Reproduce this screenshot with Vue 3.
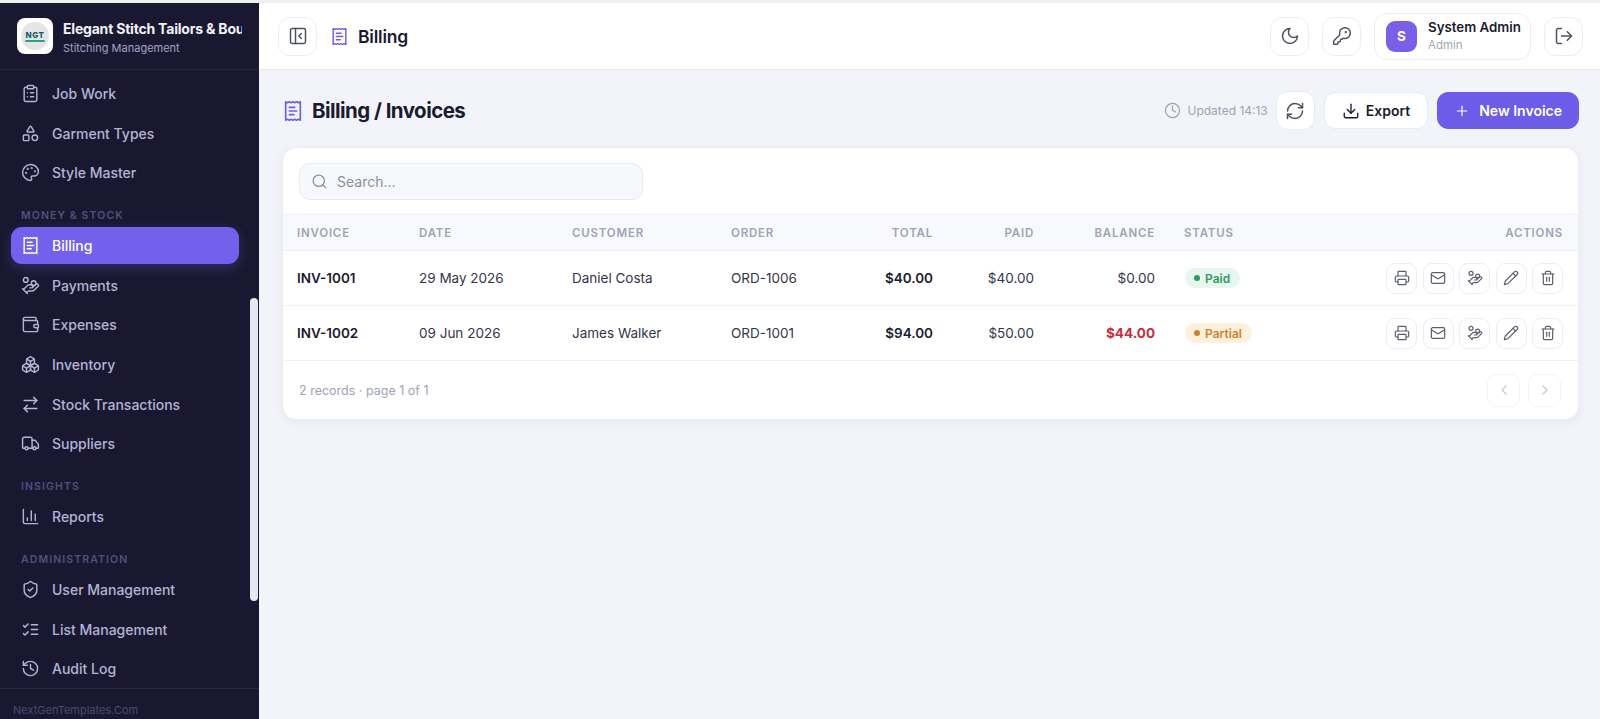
<template>
  <div class="app">
    <aside class="sidebar">
      <div class="brand">
        <div class="logo">
          <div class="logo-mark">
            <span>NGT</span>
            <i></i>
          </div>
        </div>
        <div class="brand-text">
          <div class="brand-name">Elegant Stitch Tailors &amp; Boutique</div>
          <div class="brand-sub">Stitching Management</div>
        </div>
      </div>

      <nav class="nav">
        <template v-for="group in navGroups" :key="group.title">
          <div v-if="group.title" class="nav-title">{{ group.title }}</div>
          <a v-for="item in group.items" :key="item.label" class="nav-item" :class="{ active: item.active }">
            <Icon :name="item.icon" :size="19" />
            <span>{{ item.label }}</span>
          </a>
        </template>
        <div class="scroll-thumb"></div>
      </nav>

      <div class="side-foot">NextGenTemplates.Com</div>
    </aside>

    <div class="main">
      <header class="topbar">
        <button class="icon-btn"><Icon name="panel" :size="20" /></button>
        <Icon class="accent" name="receipt" :size="19" />
        <div class="top-title">Billing</div>
        <div class="spacer"></div>
        <button class="icon-btn"><Icon name="moon" :size="20" /></button>
        <button class="icon-btn"><Icon name="key" :size="20" /></button>
        <div class="user">
          <div class="avatar">S</div>
          <div>
            <div class="user-name">System Admin</div>
            <div class="user-role">Admin</div>
          </div>
        </div>
        <button class="icon-btn"><Icon name="logout" :size="20" /></button>
      </header>

      <main class="content">
        <div class="page-head">
          <Icon class="accent" name="receipt" :size="22" />
          <h1>Billing / Invoices</h1>
          <div class="spacer"></div>
          <div class="updated">
            <Icon name="clock" :size="17" />
            <span>Updated 14:13</span>
          </div>
          <button class="icon-btn soft"><Icon name="refresh" :size="20" /></button>
          <button class="btn"><Icon name="download" :size="18" />Export</button>
          <button class="btn primary"><Icon name="plus" :size="16" />New Invoice</button>
        </div>

        <section class="card">
          <div class="card-top">
            <div class="search">
              <Icon name="search" :size="17" />
              <span>Search...</span>
            </div>
          </div>

          <table>
            <colgroup>
              <col style="width: 122px" />
              <col style="width: 153px" />
              <col style="width: 159px" />
              <col style="width: 115px" />
              <col style="width: 115px" />
              <col style="width: 101px" />
              <col style="width: 121px" />
              <col style="width: 120px" />
              <col />
            </colgroup>
            <thead>
              <tr>
                <th>Invoice</th>
                <th>Date</th>
                <th>Customer</th>
                <th>Order</th>
                <th class="num">Total</th>
                <th class="num">Paid</th>
                <th class="num">Balance</th>
                <th>Status</th>
                <th class="num">Actions</th>
              </tr>
            </thead>
            <tbody>
              <tr v-for="row in invoices" :key="row.id">
                <td class="strong">{{ row.id }}</td>
                <td>{{ row.date }}</td>
                <td>{{ row.customer }}</td>
                <td>{{ row.order }}</td>
                <td class="num strong">{{ row.total }}</td>
                <td class="num">{{ row.paid }}</td>
                <td class="num" :class="{ due: row.due }">{{ row.balance }}</td>
                <td>
                  <span class="pill" :class="row.status.toLowerCase()"><i></i>{{ row.status }}</span>
                </td>
                <td>
                  <div class="actions">
                    <button v-for="a in rowActions" :key="a" class="act"><Icon :name="a" :size="16" /></button>
                  </div>
                </td>
              </tr>
            </tbody>
          </table>

          <div class="card-foot">
            <span>2 records · page 1 of 1</span>
            <div class="pager">
              <button class="page-btn"><Icon name="left" :size="16" /></button>
              <button class="page-btn"><Icon name="right" :size="16" /></button>
            </div>
          </div>
        </section>
      </main>
    </div>
  </div>
</template>

<script setup>
import { h } from 'vue'

// lucide-style icons, kept as raw svg markup
const icons = {
  clipboard: '<rect x="8" y="2" width="8" height="4" rx="1"/><path d="M16 4h2a2 2 0 0 1 2 2v14a2 2 0 0 1-2 2H6a2 2 0 0 1-2-2V6a2 2 0 0 1 2-2h2"/><path d="M12 11h4"/><path d="M12 16h4"/><path d="M8 11h.01"/><path d="M8 16h.01"/>',
  shapes: '<path d="M8.3 10a.7.7 0 0 1-.626-1.079L11.4 3a.7.7 0 0 1 1.198-.043L16.3 8.9a.7.7 0 0 1-.572 1.1Z"/><rect x="3" y="14" width="7" height="7" rx="1"/><circle cx="17.5" cy="17.5" r="3.5"/>',
  palette: '<circle cx="13.5" cy="6.5" r=".5" fill="currentColor"/><circle cx="17.5" cy="10.5" r=".5" fill="currentColor"/><circle cx="8.5" cy="7.5" r=".5" fill="currentColor"/><circle cx="6.5" cy="12.5" r=".5" fill="currentColor"/><path d="M12 2C6.5 2 2 6.5 2 12s4.5 10 10 10c.926 0 1.648-.746 1.648-1.688 0-.437-.18-.835-.437-1.125-.29-.289-.438-.652-.438-1.125a1.64 1.64 0 0 1 1.668-1.668h1.996c3.051 0 5.555-2.503 5.555-5.554C21.965 6.012 17.461 2 12 2z"/>',
  receipt: '<path d="M4 2v20l2-1 2 1 2-1 2 1 2-1 2 1 2-1 2 1V2l-2 1-2-1-2 1-2-1-2 1-2-1-2 1Z"/><path d="M14 8H8"/><path d="M16 12H8"/><path d="M13 16H8"/>',
  coins: '<path d="M11 15h2a2 2 0 1 0 0-4h-3c-.6 0-1.1.2-1.4.6L3 17"/><path d="m7 21 1.6-1.4c.3-.4.8-.6 1.4-.6h4c1.1 0 2.1-.4 2.8-1.2l4.6-4.4a2 2 0 0 0-2.75-2.91l-4.2 3.9"/><path d="m2 16 6 6"/><circle cx="16" cy="9" r="2.9"/><circle cx="6" cy="5" r="3"/>',
  wallet: '<path d="M19 7V4a1 1 0 0 0-1-1H5a2 2 0 0 0 0 4h15a1 1 0 0 1 1 1v4h-3a2 2 0 0 0 0 4h3a1 1 0 0 0 1-1v-2a1 1 0 0 0-1-1"/><path d="M3 5v14a2 2 0 0 0 2 2h15a1 1 0 0 0 1-1v-4"/>',
  boxes: '<path d="M2.97 12.92A2 2 0 0 0 2 14.63v3.24a2 2 0 0 0 .97 1.71l3 1.8a2 2 0 0 0 2.06 0L12 19v-5.5l-5-3-4.03 2.42Z"/><path d="m7 16.5-4.74-2.85"/><path d="m7 16.5 5-3"/><path d="M7 16.5v5.17"/><path d="M12 13.5V19l3.97 2.38a2 2 0 0 0 2.06 0l3-1.8a2 2 0 0 0 .97-1.71v-3.24a2 2 0 0 0-.97-1.71L17 10.5l-5 3Z"/><path d="m17 16.5-5-3"/><path d="m17 16.5 4.74-2.85"/><path d="M17 16.5v5.17"/><path d="M7.97 4.42A2 2 0 0 0 7 6.13v4.37l5 3 5-3V6.13a2 2 0 0 0-.97-1.71l-3-1.8a2 2 0 0 0-2.06 0l-3 1.8Z"/><path d="M12 8 7.26 5.15"/><path d="m12 8 4.74-2.85"/><path d="M12 13.5V8"/>',
  swap: '<path d="m16 3 4 4-4 4"/><path d="M20 7H4"/><path d="m8 21-4-4 4-4"/><path d="M4 17h16"/>',
  truck: '<path d="M14 18V6a2 2 0 0 0-2-2H4a2 2 0 0 0-2 2v11a1 1 0 0 0 1 1h2"/><path d="M15 18H9"/><path d="M19 18h2a1 1 0 0 0 1-1v-3.65a1 1 0 0 0-.22-.624l-3.48-4.35A1 1 0 0 0 17.52 8H14"/><circle cx="17" cy="18" r="2"/><circle cx="7" cy="18" r="2"/>',
  chart: '<path d="M3 3v16a2 2 0 0 0 2 2h16"/><path d="M18 17V9"/><path d="M13 17V5"/><path d="M8 17v-3"/>',
  shield: '<path d="M20 13c0 5-3.5 7.5-7.66 8.95a1 1 0 0 1-.67-.01C7.5 20.5 4 18 4 13V6a1 1 0 0 1 1-1c2 0 4.5-1.2 6.24-2.72a1.17 1.17 0 0 1 1.52 0C14.51 3.81 17 5 19 5a1 1 0 0 1 1 1z"/><path d="m9 12 2 2 4-4"/>',
  checks: '<path d="m3 17 2 2 4-4"/><path d="m3 7 2 2 4-4"/><path d="M13 6h8"/><path d="M13 12h8"/><path d="M13 18h8"/>',
  history: '<path d="M3 12a9 9 0 1 0 9-9 9.75 9.75 0 0 0-6.74 2.74L3 8"/><path d="M3 3v5h5"/><path d="M12 7v5l4 2"/>',
  panel: '<rect x="3" y="3" width="18" height="18" rx="2"/><path d="M9 3v18"/><path d="m16 15-3-3 3-3"/>',
  moon: '<path d="M12 3a6 6 0 0 0 9 9 9 9 0 1 1-9-9Z"/>',
  key: '<path d="M2.586 17.414A2 2 0 0 0 2 18.828V21a1 1 0 0 0 1 1h3a1 1 0 0 0 1-1v-1a1 1 0 0 1 1-1h1a1 1 0 0 0 1-1v-1a1 1 0 0 1 1-1h.172a2 2 0 0 0 1.414-.586l.814-.814a6.5 6.5 0 1 0-4-4z"/><circle cx="16.5" cy="7.5" r=".5" fill="currentColor"/>',
  logout: '<path d="M9 21H5a2 2 0 0 1-2-2V5a2 2 0 0 1 2-2h4"/><path d="m16 17 5-5-5-5"/><path d="M21 12H9"/>',
  clock: '<circle cx="12" cy="12" r="10"/><path d="M12 6v6l4 2"/>',
  refresh: '<path d="M3 12a9 9 0 0 1 9-9 9.75 9.75 0 0 1 6.74 2.74L21 8"/><path d="M21 3v5h-5"/><path d="M21 12a9 9 0 0 1-9 9 9.75 9.75 0 0 1-6.74-2.74L3 16"/><path d="M8 16H3v5"/>',
  download: '<path d="M21 15v4a2 2 0 0 1-2 2H5a2 2 0 0 1-2-2v-4"/><path d="m7 10 5 5 5-5"/><path d="M12 15V3"/>',
  plus: '<path d="M5 12h14"/><path d="M12 5v14"/>',
  search: '<circle cx="11" cy="11" r="8"/><path d="m21 21-4.34-4.34"/>',
  printer: '<path d="M6 18H4a2 2 0 0 1-2-2v-5a2 2 0 0 1 2-2h16a2 2 0 0 1 2 2v5a2 2 0 0 1-2 2h-2"/><path d="M6 9V3a1 1 0 0 1 1-1h10a1 1 0 0 1 1 1v6"/><rect x="6" y="14" width="12" height="8" rx="1"/>',
  mail: '<rect x="2" y="4" width="20" height="16" rx="2"/><path d="m22 7-8.97 5.7a1.94 1.94 0 0 1-2.06 0L2 7"/>',
  pencil: '<path d="M21.174 6.812a1 1 0 0 0-3.986-3.987L3.842 16.174a2 2 0 0 0-.5.83l-1.321 4.352a.5.5 0 0 0 .623.622l4.353-1.32a2 2 0 0 0 .83-.497z"/><path d="m15 5 4 4"/>',
  trash: '<path d="M3 6h18"/><path d="M19 6v14c0 1-1 2-2 2H7c-1 0-2-1-2-2V6"/><path d="M8 6V4c0-1 1-2 2-2h4c1 0 2 1 2 2v2"/><line x1="10" x2="10" y1="11" y2="17"/><line x1="14" x2="14" y1="11" y2="17"/>',
  left: '<path d="m15 18-6-6 6-6"/>',
  right: '<path d="m9 18 6-6-6-6"/>',
}

const Icon = (props) =>
  h('svg', {
    width: props.size,
    height: props.size,
    viewBox: '0 0 24 24',
    fill: 'none',
    stroke: 'currentColor',
    'stroke-width': 1.8,
    'stroke-linecap': 'round',
    'stroke-linejoin': 'round',
    innerHTML: icons[props.name],
  })
Icon.props = ['name', 'size']

const navGroups = [
  {
    title: '',
    items: [
      { label: 'Job Work', icon: 'clipboard' },
      { label: 'Garment Types', icon: 'shapes' },
      { label: 'Style Master', icon: 'palette' },
    ],
  },
  {
    title: 'Money & Stock',
    items: [
      { label: 'Billing', icon: 'receipt', active: true },
      { label: 'Payments', icon: 'coins' },
      { label: 'Expenses', icon: 'wallet' },
      { label: 'Inventory', icon: 'boxes' },
      { label: 'Stock Transactions', icon: 'swap' },
      { label: 'Suppliers', icon: 'truck' },
    ],
  },
  {
    title: 'Insights',
    items: [{ label: 'Reports', icon: 'chart' }],
  },
  {
    title: 'Administration',
    items: [
      { label: 'User Management', icon: 'shield' },
      { label: 'List Management', icon: 'checks' },
      { label: 'Audit Log', icon: 'history' },
    ],
  },
]

const rowActions = ['printer', 'mail', 'coins', 'pencil', 'trash']

const invoices = [
  { id: 'INV-1001', date: '29 May 2026', customer: 'Daniel Costa', order: 'ORD-1006', total: '$40.00', paid: '$40.00', balance: '$0.00', status: 'Paid' },
  { id: 'INV-1002', date: '09 Jun 2026', customer: 'James Walker', order: 'ORD-1001', total: '$94.00', paid: '$50.00', balance: '$44.00', status: 'Partial', due: true },
]
</script>

<style scoped>
.app {
  display: flex;
  height: 719px;
  padding-top: 3px;
  box-sizing: border-box;
  overflow: hidden;
  background: #efeff1;
  font-family: Inter, "Liberation Sans", sans-serif;
  color: #1b1b30;
}
svg {
  flex: none;
  display: block;
}
button {
  font-family: inherit;
  padding: 0;
  cursor: pointer;
}

/* sidebar */
.sidebar {
  width: 259px;
  flex: none;
  display: flex;
  flex-direction: column;
  background: #1a1830;
  overflow: hidden;
}
.brand {
  height: 67px;
  flex: none;
  box-sizing: border-box;
  display: flex;
  align-items: center;
  gap: 10px;
  padding: 0 0 0 17px;
  border-bottom: 1px solid #27253f;
}
.logo {
  width: 36px;
  height: 36px;
  flex: none;
  border-radius: 8px;
  background: #fff;
  display: flex;
  align-items: center;
  justify-content: center;
}
.logo-mark {
  width: 28px;
  height: 28px;
  border-radius: 50%;
  background: #e4e6e6;
  display: flex;
  flex-direction: column;
  align-items: center;
  justify-content: center;
}
.logo-mark span {
  font-size: 8px;
  line-height: 8px;
  font-weight: 800;
  letter-spacing: 0.5px;
  color: #155a63;
}
.logo-mark i {
  width: 20px;
  height: 2px;
  margin-top: 1px;
  border-radius: 2px;
  background: #2f9d92;
}
.brand-text {
  min-width: 0;
  flex: 1;
  margin-right: 17px;
  padding-top: 2px;
  overflow: hidden;
}
.brand-name {
  font-size: 14px;
  line-height: 20px;
  font-weight: 700;
  letter-spacing: -0.2px;
  color: #f1f1f8;
  white-space: nowrap;
}
.brand-sub {
  margin-top: 2px;
  font-size: 11px;
  line-height: 15px;
  color: #a4a3c6;
  white-space: nowrap;
}
.nav {
  flex: 1;
  min-height: 0;
  overflow: hidden;
  position: relative;
  padding: 5px 20px 0 11px;
}
.nav-title {
  height: 14px;
  line-height: 14px;
  margin: 18px 0 4px 10px;
  font-size: 10.5px;
  font-weight: 600;
  letter-spacing: 1.1px;
  text-transform: uppercase;
  color: #51507c;
}
.nav-item {
  height: 37px;
  margin-bottom: 2.6px;
  display: flex;
  align-items: center;
  gap: 12px;
  padding-left: 10px;
  border-radius: 11px;
  font-size: 14px;
  font-weight: 500;
  color: #b3b4d6;
}
.nav-item.active {
  background: #7361ee;
  color: #fff;
  box-shadow: 0 4px 12px rgba(108, 92, 231, 0.3);
}
.scroll-thumb {
  position: absolute;
  top: 228px;
  right: 1px;
  width: 8px;
  height: 303px;
  border-radius: 4px;
  background: #e6e7f1;
}
.side-foot {
  height: 31px;
  flex: none;
  box-sizing: border-box;
  border-top: 1px solid #27253f;
  padding: 14px 0 0 13px;
  font-size: 11px;
  line-height: 14px;
  color: #4b4a72;
}

/* main area */
.main {
  flex: 1;
  min-width: 0;
  display: flex;
  flex-direction: column;
  background: #f3f4f9;
}
.topbar {
  height: 67px;
  flex: none;
  box-sizing: border-box;
  display: flex;
  align-items: center;
  gap: 13px;
  padding: 0 17px 0 19px;
  background: #fff;
  border-bottom: 1px solid #e7e8ef;
}
.spacer {
  flex: 1;
}
.icon-btn {
  width: 39px;
  height: 39px;
  flex: none;
  display: flex;
  align-items: center;
  justify-content: center;
  background: #fff;
  border: 1px solid #eceef3;
  border-radius: 12px;
  color: #4d5260;
}
.accent {
  color: #6c5ce7;
}
.top-title {
  margin-left: -4px;
  font-size: 17.5px;
  font-weight: 600;
  letter-spacing: -0.2px;
}
.user {
  width: 157px;
  height: 47px;
  box-sizing: border-box;
  display: flex;
  align-items: center;
  gap: 11px;
  padding-left: 11px;
  border: 1px solid #eceef3;
  border-radius: 13px;
}
.avatar {
  width: 31px;
  height: 31px;
  border-radius: 9px;
  background: #7a5fe8;
  color: #fff;
  display: flex;
  align-items: center;
  justify-content: center;
  font-size: 13.5px;
  font-weight: 700;
}
.user-name {
  font-size: 13.3px;
  line-height: 17px;
  font-weight: 600;
  white-space: nowrap;
}
.user-role {
  margin-top: 2px;
  font-size: 11.5px;
  line-height: 15px;
  color: #a3a6b6;
}

.content {
  flex: 1;
  padding: 21px 21px 0 23px;
}
.page-head {
  display: flex;
  align-items: center;
  height: 39px;
  gap: 9px;
}
.page-head h1 {
  margin: 0 0 0 -1px;
  font-size: 20.5px;
  font-weight: 700;
  letter-spacing: -0.55px;
}
.updated {
  display: flex;
  align-items: center;
  gap: 6px;
  font-size: 12px;
  color: #a0a3b4;
  margin-right: -1px;
}
.soft {
  border-color: #e9ebf1;
}
.btn {
  height: 37px;
  display: flex;
  align-items: center;
  gap: 6px;
  padding: 0 17px;
  background: #fff;
  border: 1px solid #e9ebf1;
  border-radius: 11px;
  font-size: 14px;
  font-weight: 600;
  color: #1b1b30;
}
.btn.primary {
  background: #6c5ce7;
  border-color: #6c5ce7;
  color: #fff;
  padding: 0 16px;
  gap: 9px;
}

.card {
  margin-top: 17px;
  background: #fff;
  border: 1px solid #eceef3;
  border-radius: 14px;
  box-shadow: 0 2px 10px rgba(30, 30, 70, 0.06);
  overflow: hidden;
}
.card-top {
  height: 66px;
  box-sizing: border-box;
  padding: 15px 16px 0;
}
.search {
  width: 344px;
  height: 37px;
  box-sizing: border-box;
  display: flex;
  align-items: center;
  gap: 9px;
  padding-left: 11px;
  padding-bottom: 1px;
  background: #f7f8fc;
  border: 1px solid #e8eaf1;
  border-radius: 11px;
  font-size: 14px;
  color: #8b8f9e;
}
table {
  width: 100%;
  border-collapse: collapse;
  table-layout: fixed;
}
th {
  height: 36px;
  padding: 0 14px;
  box-sizing: border-box;
  background: #f8f9fc;
  border-top: 1px solid #f0f1f6;
  border-bottom: 1px solid #eceef3;
  text-align: left;
  font-size: 11.5px;
  font-weight: 600;
  letter-spacing: 0.8px;
  text-transform: uppercase;
  color: #9fa3b5;
}
th:last-child,
td:last-child {
  padding-right: 15px;
}
th:nth-child(8),
td:nth-child(8) {
  padding-left: 15px;
}
td {
  height: 55px;
  padding: 0 14px;
  box-sizing: border-box;
  border-bottom: 1px solid #f0f1f5;
  font-size: 13.5px;
  color: #33364a;
  white-space: nowrap;
}
.num {
  text-align: right;
}
td.strong {
  font-weight: 600;
  color: #1b1b30;
}
td.due {
  font-weight: 700;
  color: #c62f3b;
}
.pill {
  display: inline-flex;
  align-items: center;
  gap: 5px;
  height: 20px;
  padding: 0 10px 0 9px;
  border-radius: 10px;
  font-size: 12px;
  font-weight: 600;
  margin-left: 1px;
}
.pill i {
  width: 6px;
  height: 6px;
  border-radius: 50%;
  background: currentColor;
}
.pill.paid {
  background: #e7f6ee;
  color: #2f9a62;
}
.pill.partial {
  background: #fdf0dc;
  color: #cf842a;
}
.actions {
  display: flex;
  justify-content: flex-end;
  gap: 5.5px;
}
.act {
  width: 31px;
  height: 31px;
  flex: none;
  display: flex;
  align-items: center;
  justify-content: center;
  background: #fff;
  border: 1px solid #eceef3;
  border-radius: 9px;
  color: #5b606e;
}
.card-foot {
  height: 58px;
  display: flex;
  align-items: center;
  justify-content: space-between;
  padding: 0 17px 0 16px;
  font-size: 12.5px;
  color: #a0a3b4;
}
.pager {
  display: flex;
  gap: 8px;
}
.page-btn {
  width: 33px;
  height: 33px;
  display: flex;
  align-items: center;
  justify-content: center;
  background: #fff;
  border: 1px solid #f3f4f7;
  border-radius: 9px;
  color: #c4c7d1;
}
</style>

<style>
html,
body {
  margin: 0;
  background: #f3f4f9;
}
</style>
